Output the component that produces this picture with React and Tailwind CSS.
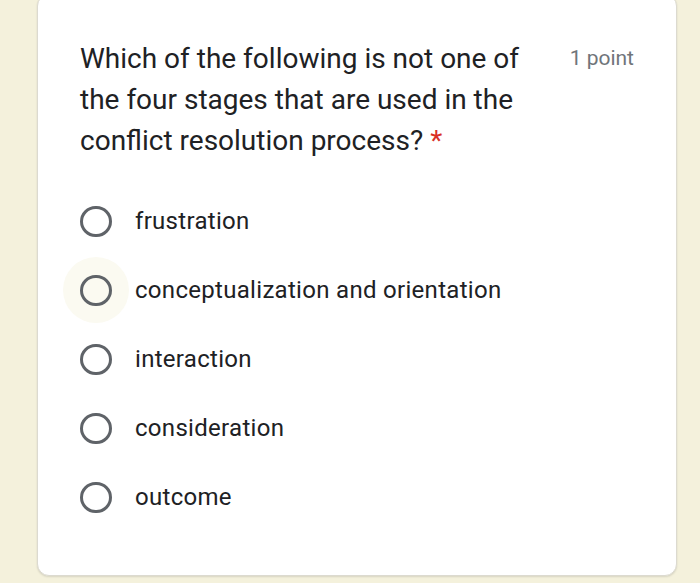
const options = [
  "frustration",
  "conceptualization and orientation",
  "interaction",
  "consideration",
  "outcome",
];

function Radio({ halo }) {
  return (
    <div className="relative flex h-[32px] w-[32px] shrink-0 items-center justify-center">
      {halo && (
        <div className="absolute -inset-[17px] rounded-full bg-[#fbfaf1]" />
      )}
      <div className="relative h-[31px] w-[32px] rounded-full border-[3px] border-[#5f6368]" />
    </div>
  );
}

export default function App() {
  return (
    <div className="h-[583px] w-[700px] overflow-hidden bg-[#f4f1dc]" style={{ fontFamily: "Roboto, 'Liberation Sans', sans-serif" }}>
      <div className="ml-[37px] mt-[-6px] h-[582px] w-[640px] rounded-[12px] border border-[#dcdad0] bg-white shadow-[0_1px_2px_rgba(0,0,0,0.12)]">
        <div className="flex pl-[42px] pr-[42px] pt-[43px]">
          <div className="w-[452px] text-[28px] leading-[41px] text-[#202124]">
            Which of the following is not one of the four stages that are used in the conflict resolution process?{" "}
            <span className="text-[#d93025]">*</span>
          </div>
          <div className="ml-auto pt-[5px] text-[21px] text-[#70757a]">1 point</div>
        </div>
        <div className="mt-[44px] flex flex-col gap-[37px] pl-[42px]">
          {options.map((o, i) => (
            <div key={o} className="flex h-[32px] items-center gap-[23px]">
              <Radio halo={i === 1} />
              <span className="text-[24px] tracking-[0.3px] text-[#202124]">{o}</span>
            </div>
          ))}
        </div>
      </div>
    </div>
  );
}
